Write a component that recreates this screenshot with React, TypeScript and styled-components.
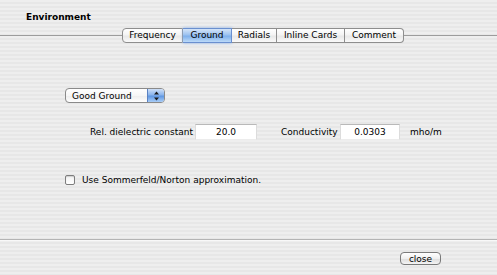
import styled, { createGlobalStyle } from "styled-components";

const GlobalStyle = createGlobalStyle`
  html, body {
    margin: 0;
    padding: 0;
  }
  body {
    font-family: "DejaVu Sans", "Liberation Sans", sans-serif;
    font-size: 9px;
    color: #000;
  }
`;

const tabs = ["Frequency", "Ground", "Radials", "Inline Cards", "Comment"];
const tabWidths = [61, 49, 45, 68, 59];

function App() {
  return (
    <Window>
      <GlobalStyle />
      <Header>Environment</Header>
      <TabRow>
        <Rule $w={122} />
        <Segments>
          {tabs.map((t, i) => (
            <Segment
              key={t}
              $w={tabWidths[i]}
              $selected={t === "Ground"}
              $first={i === 0}
              $last={i === tabs.length - 1}
            >
              {t}
            </Segment>
          ))}
        </Segments>
        <Rule />
      </TabRow>
      <Body>
        <Popup>
          <PopupLabel>Good Ground</PopupLabel>
          <PopupArrows>
            <svg width="7" height="10" viewBox="0 0 7 10">
              <path d="M3.5 0.5 L6 3.5 L1 3.5 Z" fill="#1a1a1a" />
              <path d="M3.5 9.5 L6 6.5 L1 6.5 Z" fill="#1a1a1a" />
            </svg>
          </PopupArrows>
        </Popup>
        <FieldRow>
          <Label $w={96}>Rel. dielectric constant</Label>
          <Field $w={62}>20.0</Field>
          <Label $w={50} $gap={24}>Conductivity</Label>
          <Field $w={60}>0.0303</Field>
          <Unit>mho/m</Unit>
        </FieldRow>
        <CheckRow>
          <Box />
          <span>Use Sommerfeld/Norton approximation.</span>
        </CheckRow>
      </Body>
      <Footer>
        <Button>close</Button>
      </Footer>
    </Window>
  );
}

const pinstripe = `repeating-linear-gradient(
  to bottom,
  #eeeeee 0px,
  #eeeeee 2px,
  #e7e7e7 2px,
  #e7e7e7 4px
)`;

const Window = styled.div`
  width: 497px;
  height: 275px;
  display: flex;
  flex-direction: column;
  background: ${pinstripe};
  overflow: hidden;
`;

const Header = styled.div`
  height: 27px;
  padding-left: 26px;
  box-sizing: border-box;
  padding-top: 12px;
  font-weight: bold;
  font-size: 9px;
`;

const TabRow = styled.div`
  display: flex;
  align-items: center;
  height: 16px;
`;

const Rule = styled.div<{ $w?: number }>`
  flex: ${(p) => (p.$w ? `0 0 ${p.$w}px` : "1")};
  height: 1px;
  background: #9c9c9c;
`;

const Segments = styled.div`
  display: flex;
  height: 15px;
`;

const Segment = styled.div<{ $w: number; $selected: boolean; $first: boolean; $last: boolean }>`
  width: ${(p) => p.$w}px;
  box-sizing: border-box;
  display: flex;
  align-items: center;
  justify-content: center;
  font-size: 9px;
  border: 1px solid ${(p) => (p.$selected ? "#6a8fcf" : "#8e8e8e")};
  border-left-width: ${(p) => (p.$first ? 1 : 0)}px;
  border-radius: ${(p) =>
    p.$first ? "4px 0 0 4px" : p.$last ? "0 4px 4px 0" : "0"};
  background: ${(p) =>
    p.$selected
      ? "linear-gradient(to bottom, #d4e4f8 0%, #9cc2f0 45%, #7fb0ec 55%, #bcdaf8 100%)"
      : "linear-gradient(to bottom, #ffffff 0%, #f4f4f4 45%, #e8e8e8 55%, #fafafa 100%)"};
  box-shadow: ${(p) => (p.$selected ? "0 0 3px #8db4ea" : "none")};
`;

const Body = styled.div`
  flex: 1;
  display: flex;
  flex-direction: column;
  padding: 45px 0 0 65px;
  border-bottom: 1px solid #b4b4b4;
  box-shadow: 0 1px 0 #f8f8f8;
`;

const Popup = styled.div`
  width: 100px;
  height: 15px;
  box-sizing: border-box;
  display: flex;
  border: 1px solid #8a8a8a;
  border-radius: 4px;
  overflow: hidden;
  background: linear-gradient(to bottom, #ffffff 0%, #f6f6f6 50%, #ececec 51%, #ffffff 100%);
`;

const PopupLabel = styled.div`
  flex: 1;
  padding-left: 6px;
  display: flex;
  align-items: center;
  font-size: 9px;
`;

const PopupArrows = styled.div`
  width: 16px;
  display: flex;
  align-items: center;
  justify-content: center;
  border-left: 1px solid #5b82c2;
  background: linear-gradient(to bottom, #cfe0f7 0%, #8ab4ec 45%, #5f97e2 55%, #a9cdf7 100%);
`;

const FieldRow = styled.div`
  display: flex;
  align-items: center;
  margin-top: 21px;
  padding-left: 25px;
`;

const Label = styled.span<{ $w: number; $gap?: number }>`
  width: ${(p) => p.$w}px;
  margin-left: ${(p) => p.$gap || 0}px;
  margin-right: 9px;
  white-space: nowrap;
`;

const Field = styled.div<{ $w: number }>`
  width: ${(p) => p.$w}px;
  height: 16px;
  box-sizing: border-box;
  display: flex;
  align-items: center;
  justify-content: center;
  background: #fff;
  border-top: 1px solid #b9b9b9;
  border-left: 1px solid #dcdcdc;
  border-right: 1px solid #dcdcdc;
  border-bottom: 1px solid #ececec;
`;

const Unit = styled.span`
  margin-left: 10px;
`;

const CheckRow = styled.div`
  display: flex;
  align-items: center;
  gap: 7px;
  margin-top: 35px;
`;

const Box = styled.div`
  width: 10px;
  height: 10px;
  box-sizing: border-box;
  border: 1px solid #7d7d7d;
  border-radius: 2px;
  background: linear-gradient(to bottom, #f2f2f2, #ffffff);
  box-shadow: inset 0 1px 1px rgba(0, 0, 0, 0.15);
`;

const Footer = styled.div`
  height: 35px;
  display: flex;
  align-items: center;
  justify-content: flex-end;
  padding-right: 56px;
  padding-top: 2px;
  box-sizing: border-box;
`;

const Button = styled.div`
  width: 41px;
  height: 13px;
  box-sizing: border-box;
  display: flex;
  align-items: center;
  justify-content: center;
  font-size: 9px;
  border: 1px solid #7a7a7a;
  border-radius: 4px;
  background: linear-gradient(to bottom, #ffffff 0%, #efefef 50%, #dcdcdc 51%, #f4f4f4 100%);
`;

export default App;
